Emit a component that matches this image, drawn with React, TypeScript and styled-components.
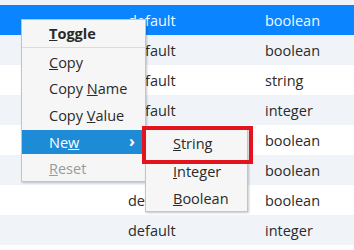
import React from 'react';
import styled, { createGlobalStyle, css } from 'styled-components';

const GlobalStyle = createGlobalStyle`
  html, body {
    margin: 0;
    padding: 0;
    background: #ffffff;
  }
  body {
    font-family: "Open Sans", "Noto Sans", sans-serif;
    font-size: 14px;
    color: #222222;
  }
`;

const Viewport = styled.div`
  position: relative;
  width: 354px;
  height: 250px;
  overflow: hidden;
`;

const List = styled.div`
  display: flex;
  flex-direction: column;
  margin-top: -25px;
`;

const Row = styled.div<{ $stripe: boolean; $selected?: boolean }>`
  display: grid;
  grid-template-columns: 128px 137px 1fr;
  align-items: center;
  height: 30px;
  background: ${({ $stripe }) => ($stripe ? '#f0f4f9' : '#ffffff')};
  color: #2b2b2b;

  ${({ $selected }) =>
    $selected &&
    css`
      background: #0a84ff;
      color: #f2f8ff;
    `}
`;

const Cell = styled.span`
  white-space: nowrap;
  font-size: 14.5px;
`;

const Menu = styled.div<{ $left: number; $top: number; $width: number }>`
  position: absolute;
  left: ${({ $left }) => $left}px;
  top: ${({ $top }) => $top}px;
  width: ${({ $width }) => $width}px;
  box-sizing: border-box;
  background: #f6f6f6;
  border: 1px solid #c4c4c4;
  box-shadow: 1px 1px 2px rgba(0, 0, 0, 0.22);
  display: flex;
  flex-direction: column;
`;

const Item = styled.div<{ $bold?: boolean; $active?: boolean; $disabled?: boolean; $h?: number }>`
  display: flex;
  align-items: center;
  justify-content: space-between;
  height: ${({ $h }) => $h ?? 26}px;
  padding: 0 10px 0 27px;
  font-size: 14.5px;
  color: #2a2a2a;
  white-space: nowrap;

  ${({ $bold }) =>
    $bold &&
    css`
      font-weight: 700;
    `}
  ${({ $active }) =>
    $active &&
    css`
      height: 24px;
      margin: 2px 0 1px;
      background: #1d8bd6;
      color: #ffffff;
    `}
  ${({ $disabled }) =>
    $disabled &&
    css`
      color: #9a9a9a;
    `}
`;

const Separator = styled.div`
  height: 1px;
  background: #dcdcdc;
  margin: 0 0 1px;
`;

const Chevron = styled.span`
  font-size: 16px;
  font-weight: 700;
  line-height: 1;
  margin-top: -2px;
`;

const Highlight = styled.div`
  position: absolute;
  left: 142px;
  top: 126px;
  width: 111px;
  height: 38px;
  box-sizing: border-box;
  border: 4px solid #e4141e;
  pointer-events: none;
`;

const rows: { type: string; selected?: boolean }[] = [
  { type: 'boolean' },
  { type: 'boolean', selected: true },
  { type: 'boolean' },
  { type: 'string' },
  { type: 'integer' },
  { type: 'boolean' },
  { type: 'boolean' },
  { type: 'boolean' },
  { type: 'integer' },
  { type: 'string' },
];

export default function App() {
  return (
    <Viewport>
      <GlobalStyle />
      <List>
        {rows.map((r, i) => (
          <Row key={i} $stripe={i % 2 === 0} $selected={r.selected}>
            <span />
            <Cell>default</Cell>
            <Cell>{r.type}</Cell>
          </Row>
        ))}
      </List>

      <Menu $left={21} $top={19} $width={125}>
        <Item $bold $h={27}>
          <span><u>T</u>oggle</span>
        </Item>
        <Separator />
        <Item><span><u>C</u>opy</span></Item>
        <Item $h={27}><span>Copy <u>N</u>ame</span></Item>
        <Item><span>Copy <u>V</u>alue</span></Item>
        <Item $active>
          <span>Ne<u>w</u></span>
          <Chevron>›</Chevron>
        </Item>
        <Item $disabled><span><u>R</u>eset</span></Item>
      </Menu>

      <Menu $left={145} $top={127} $width={103}>
        <Item $h={30}><span><u>S</u>tring</span></Item>
        <Item $h={27}><span><u>I</u>nteger</span></Item>
        <Item $h={26}><span><u>B</u>oolean</span></Item>
      </Menu>

      <Highlight />
    </Viewport>
  );
}
